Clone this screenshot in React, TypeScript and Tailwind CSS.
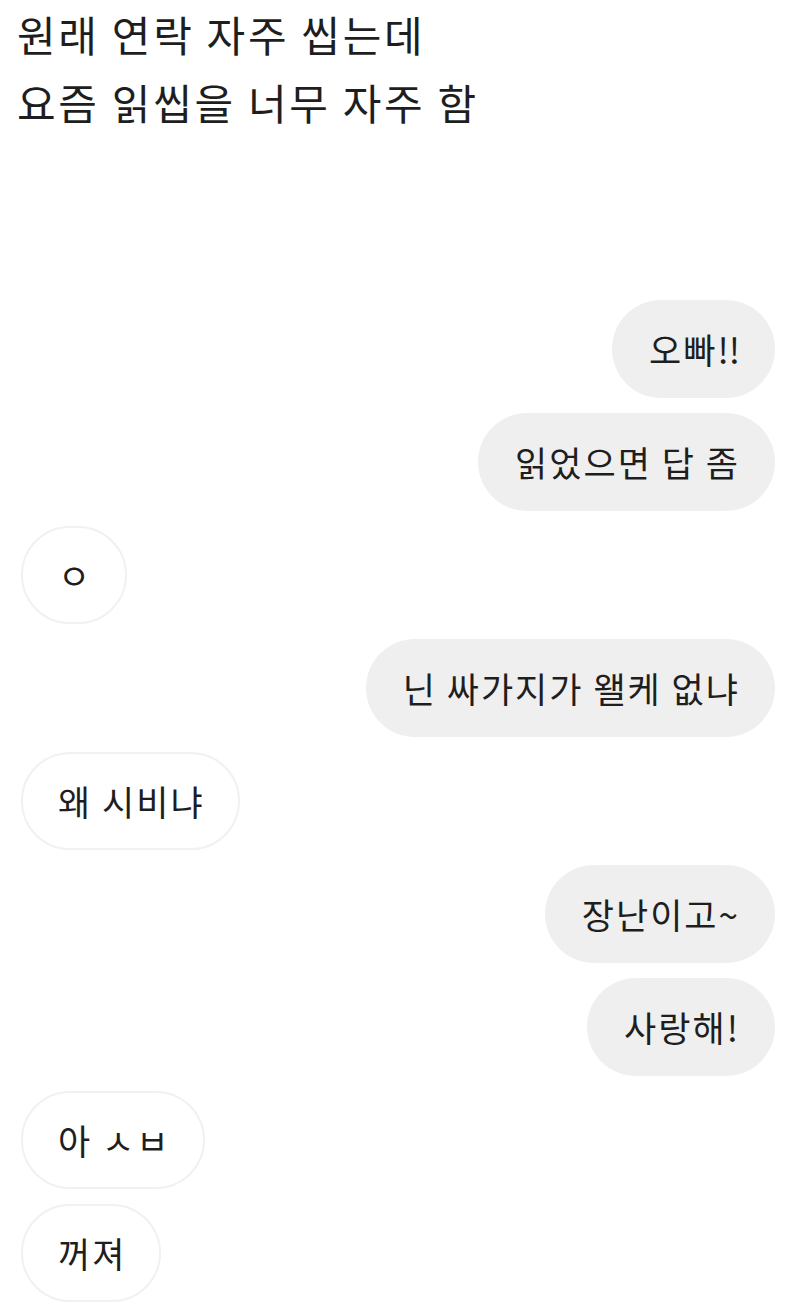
import React from "react";

type Msg = { side: "l" | "r"; text: string };

const msgs: Msg[] = [
  { side: "r", text: "오빠!!" },
  { side: "r", text: "읽었으면 답 좀" },
  { side: "l", text: "ㅇ" },
  { side: "r", text: "닌 싸가지가 왤케 없냐" },
  { side: "l", text: "왜 시비냐" },
  { side: "r", text: "장난이고~" },
  { side: "r", text: "사랑해!" },
  { side: "l", text: "아 ㅅㅂ" },
  { side: "l", text: "꺼져" },
];

export default function App() {
  return (
    <div
      className="w-[800px] h-[1311px] bg-white text-[#1e1e1e] overflow-hidden"
      style={{ fontFamily: '"Noto Sans CJK KR", "Noto Sans", sans-serif' }}
    >
      <div className="pl-[17px] text-[42px] leading-[68px] tracking-[2.7px]">
        <div>원래 연락 자주 씹는데</div>
        <div>요즘 읽씹을 너무 자주 함</div>
      </div>
      <div className="mt-[164px] flex flex-col gap-[15px] pl-[21px] pr-[25px]">
        {msgs.map((m, i) =>
          m.side === "r" ? (
            <div key={i} className="flex justify-end">
              <div className="h-[98px] pl-[37px] pr-[35px] flex items-center rounded-full bg-[#efefef] text-[35px] tracking-[2px] whitespace-nowrap">
                {m.text === "오빠!!" ? (
                  <span>
                    오빠<span className="tracking-[0px]">!!</span>
                  </span>
                ) : (
                  m.text
                )}
              </div>
            </div>
          ) : (
            <div key={i} className="flex justify-start">
              <div className="h-[98px] pl-[35px] pr-[33px] flex items-center rounded-full bg-white border-2 border-[#f1f1f1] text-[35px] tracking-[2px] whitespace-nowrap">
                {m.text}
              </div>
            </div>
          )
        )}
      </div>
    </div>
  );
}
